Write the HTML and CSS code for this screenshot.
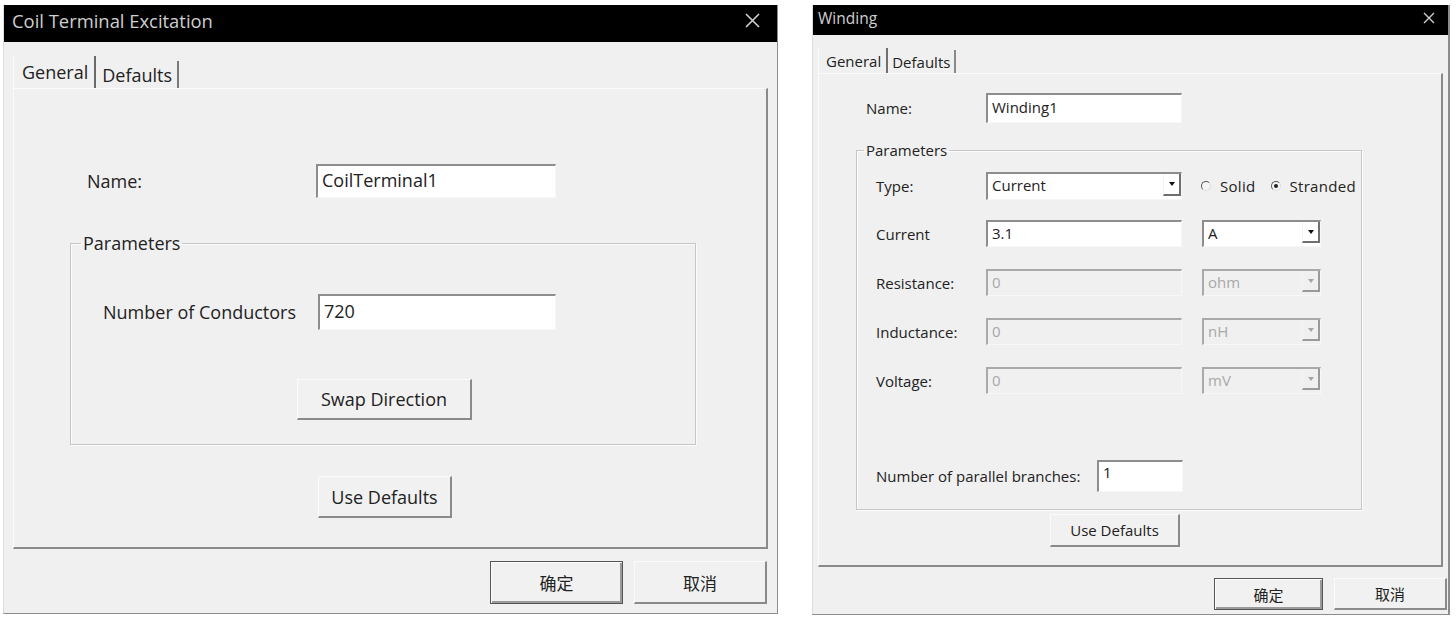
FILE: index.html
```html
<!DOCTYPE html>
<html>
<head>
<meta charset="utf-8">
<link rel="stylesheet" href="styles.css">
</head>
<body>
<div class="stage">
  <div class="dlg dlg-a">
    <div class="title">
      <span>Coil Terminal Excitation</span>
      <svg class="close" width="15" height="15" viewBox="0 0 15 15"><path d="M1 1 L14 14 M14 1 L1 14" stroke="#d0d0d0" stroke-width="1.6" fill="none"/></svg>
    </div>
    <div class="body">
      <div class="tabs">
        <span class="tab t1">General</span>
        <span class="tab t2">Defaults</span>
      </div>
      <div class="panel">
        <div class="row name-row">
          <span class="lbl">Name:</span>
          <div class="field f-name">CoilTerminal1</div>
        </div>
        <fieldset class="group">
          <legend>Parameters</legend>
          <div class="row cond-row">
            <span class="lbl">Number of Conductors</span>
            <div class="field f-cond">720</div>
          </div>
          <div class="btn swap">Swap Direction</div>
        </fieldset>
        <div class="btn usedef">Use Defaults</div>
      </div>
      <div class="footer">
        <div class="btn ok">确定</div>
        <div class="btn cancel">取消</div>
      </div>
    </div>
  </div>

  <div class="dlg dlg-b">
    <div class="title">
      <span>Winding</span>
      <svg class="close" width="12" height="12" viewBox="0 0 12 12"><path d="M1 1 L11 11 M11 1 L1 11" stroke="#d0d0d0" stroke-width="1.4" fill="none"/></svg>
    </div>
    <div class="body">
      <div class="tabs">
        <span class="tab t1">General</span>
        <span class="tab t2">Defaults</span>
      </div>
      <div class="panel">
        <div class="row name-row">
          <span class="lbl">Name:</span>
          <div class="field f-name">Winding1</div>
        </div>
        <fieldset class="group">
          <legend>Parameters</legend>
          <div class="row r-type">
            <span class="lbl">Type:</span>
            <div class="field sel f-main">Current<span class="arrow"><span class="tri"></span></span></div>
            <div class="radios">
              <span class="radio"></span><span class="rlbl">Solid</span>
              <span class="radio on"></span><span class="rlbl">Stranded</span>
            </div>
          </div>
          <div class="row r-cur">
            <span class="lbl">Current</span>
            <div class="field f-main">3.1</div>
            <div class="field sel f-unit">A<span class="arrow"><span class="tri"></span></span></div>
          </div>
          <div class="row r-dis">
            <span class="lbl">Resistance:</span>
            <div class="field dis f-main">0</div>
            <div class="field sel dis f-unit">ohm<span class="arrow"><span class="tri"></span></span></div>
          </div>
          <div class="row r-dis">
            <span class="lbl">Inductance:</span>
            <div class="field dis f-main">0</div>
            <div class="field sel dis f-unit">nH<span class="arrow"><span class="tri"></span></span></div>
          </div>
          <div class="row r-dis">
            <span class="lbl">Voltage:</span>
            <div class="field dis f-main">0</div>
            <div class="field sel dis f-unit">mV<span class="arrow"><span class="tri"></span></span></div>
          </div>
          <div class="row r-par">
            <span class="lbl lbl-par">Number of parallel branches:</span>
            <div class="field f-par">1</div>
          </div>
        </fieldset>
        <div class="btn usedef">Use Defaults</div>
      </div>
      <div class="footer">
        <div class="btn ok">确定</div>
        <div class="btn cancel">取消</div>
      </div>
    </div>
  </div>
</div>
</body>
</html>
```

FILE: styles.css
```css
* { box-sizing: border-box; }
html, body { margin: 0; padding: 0; background: #ffffff; }
body {
  font-family: "Open Sans", "Noto Sans", "Noto Sans CJK SC", sans-serif;
  color: #222;
}
.stage { display: flex; align-items: flex-start; padding-top: 5px; }

.dlg { background: #f0f0f0; display: flex; flex-direction: column; flex: none; }
.dlg-a {
  margin-left: 3px; width: 775px; height: 609px;
  border-left: 1px solid #dcdcdc; border-right: 1px solid #8c8c8c; border-bottom: 1px solid #8c8c8c;
  font-size: 18px;
}
.dlg-b {
  margin-left: 34px; width: 638px; height: 610px;
  border-left: 1px solid #dcdcdc; border-right: 2px solid #8c8c8c; border-bottom: 1px solid #8c8c8c;
  font-size: 15px;
}

.title {
  background: #000; color: #cfcfcf; flex: none;
  display: flex; align-items: center; justify-content: space-between;
  white-space: nowrap;
}
.dlg-a .title { height: 37px; padding: 0 17px 6px 8px; font-size: 18.4px; }
.dlg-b .title { height: 30px; padding: 0 13px 4px 5px; font-size: 15.5px; }

.body { flex: 1; display: flex; flex-direction: column; }
.dlg-a .body { padding: 0 9px; }
.dlg-b .body { padding: 0 1px 0 5px; }

.tabs { display: flex; align-items: flex-end; flex: none; }
.tab { display: flex; align-items: center; white-space: nowrap; }
.dlg-a .tabs { margin-top: 14px; height: 32px; }
.dlg-a .t1 { height: 32px; padding: 0 6px 0 8px; border-right: 2px solid #6a6a6a; border-left: 1px solid #fbfbfb; }
.dlg-a .t2 { height: 27px; padding: 0 5px 0 6px; border-right: 2px solid #7a7a7a; }
.dlg-b .tabs { margin-top: 13px; height: 25px; }
.dlg-b .t1 { height: 25px; padding: 0 5px 0 7px; border-right: 2px solid #707070; border-left: 1px solid #fbfbfb; }
.dlg-b .t2 { height: 23px; padding: 0 4px 0 4px; border-right: 2px solid #8a8a8a; }

.panel {
  flex: none; display: flex; flex-direction: column; align-items: flex-start;
  border-top: 1px solid #fbfbfb; border-left: 1px solid #fbfbfb;
  border-right: 2px solid #8a8a8a; border-bottom: 2px solid #8a8a8a;
}
.dlg-a .panel { height: 461px; padding-top: 75px; }
.dlg-b .panel { height: 494px; padding-top: 19px; margin-right: 4px; }

.row { display: flex; align-items: center; flex: none; }
.lbl { flex: none; white-space: nowrap; }

.field {
  background: #fff; display: flex; align-items: center; white-space: nowrap; flex: none;
  border-style: solid; border-width: 2px 1px 1px 2px;
  border-color: #8d8d8d #f7f7f7 #f7f7f7 #8d8d8d;
  padding-left: 4px;
}
.field.dis { background: #f0f0f0; color: #a8a8a8; border-color: #a9a9a9 #f7f7f7 #f7f7f7 #a9a9a9; }

.group {
  margin: 0; padding: 0; min-inline-size: 0;
  border: 1px solid #c6c6c6;
  box-shadow: inset 1px 1px #fbfbfb, 1px 1px #fbfbfb;
  display: flex; flex-direction: column; align-items: flex-start;
}
.group legend { padding: 0 2px; white-space: nowrap; }

.btn {
  display: flex; align-items: center; justify-content: center; flex: none; white-space: nowrap;
  background: #f1f1f1;
  border-style: solid; border-width: 1px 2px 2px 1px;
  border-color: #fbfbfb #8a8a8a #8a8a8a #fbfbfb;
}
.btn.ok { border: 1px solid #555; box-shadow: inset 1px 1px #fdfdfd, inset -2px -2px #9a9a9a; }
.ok, .cancel { font-family: "Noto Sans CJK SC", "Noto Sans", sans-serif; }

.footer { display: flex; justify-content: flex-end; flex: none; }

/* dialog A */
.dlg-a .name-row { margin-left: 73px; }
.dlg-a .name-row .lbl { width: 229px; }
.dlg-a .f-name { width: 240px; height: 34px; padding-bottom: 3px; }
.dlg-a .group { margin-left: 56px; margin-top: 34px; width: 626px; padding-bottom: 24px; }
.dlg-a .group legend { margin-left: 10px; line-height: 22px; }
.dlg-a .cond-row { margin-left: 32px; margin-top: 40px; }
.dlg-a .cond-row .lbl { width: 215px; }
.dlg-a .f-cond { width: 238px; height: 36px; padding-bottom: 4px; }
.dlg-a .swap { margin-left: 226px; margin-top: 49px; width: 175px; height: 41px; }
.dlg-a .usedef { margin-left: 304px; margin-top: 31px; width: 134px; height: 42px; }
.dlg-a .footer { margin-top: 12px; margin-right: 1px; gap: 11px; }
.dlg-a .footer .btn { width: 133px; height: 43px; font-size: 17px; }

/* dialog B */
.dlg-b .name-row { margin-left: 47px; }
.dlg-b .name-row .lbl { width: 120px; }
.dlg-b .f-name { width: 196px; height: 30px; padding-bottom: 4px; }
.dlg-b .group { margin-left: 37px; margin-top: 18px; width: 506px; padding-bottom: 17px; }
.dlg-b .group legend { margin-left: 7px; line-height: 18px; }
.dlg-b .group .row { margin-left: 19px; }
.dlg-b .group .lbl { width: 110px; }
.dlg-b .r-type { margin-top: 13px; }
.dlg-b .r-type .f-main { height: 28px; }
.dlg-b .r-cur { margin-top: 20px; }
.dlg-b .r-dis { margin-top: 22px; }
.dlg-b .f-main { width: 196px; height: 27px; padding-bottom: 3px; }
.dlg-b .f-unit { width: 119px; height: 27px; margin-left: 20px; padding-bottom: 3px; }
.dlg-b .r-par { margin-top: 66px; }
.dlg-b .group .lbl-par { width: 221px; }
.dlg-b .f-par { width: 86px; height: 32px; padding-bottom: 9px; }

.sel { padding-right: 0; }
.arrow {
  margin-left: auto; width: 18px; height: 100%; flex: none;
  display: flex; align-items: center; justify-content: center;
  border-right: 2px solid #6f6f6f; border-bottom: 2px solid #6f6f6f;
  border-left: 1px solid #f4f4f4;
}
.tri { width: 0; height: 0; border-left: 3px solid transparent; border-right: 3px solid transparent; border-top: 4px solid #111; }
.dis .arrow { border-right-color: #9a9a9a; border-bottom-color: #9a9a9a; }
.dis .tri { border-top-color: #a5a5a5; }

.radios { display: flex; align-items: center; margin-left: 19px; }
.radio {
  width: 10px; height: 10px; border-radius: 50%; flex: none;
  border: 1px solid; border-color: #5a5a5a #dddddd #dddddd #5a5a5a;
  background: #f4f4f4; display: flex; align-items: center; justify-content: center;
}
.radio.on::after { content: ""; width: 4px; height: 4px; border-radius: 50%; background: #222; }
.rlbl { margin-left: 9px; margin-right: 15px; letter-spacing: 0.3px; }

.dlg-b .usedef { margin-left: 231px; margin-top: 4px; width: 130px; height: 33px; }
.dlg-b .footer { margin-top: 11px; gap: 11px; }
.dlg-b .footer .ok { width: 109px; height: 32px; font-size: 15px; }
.dlg-b .footer .cancel { width: 113px; height: 32px; font-size: 15px; }
```
